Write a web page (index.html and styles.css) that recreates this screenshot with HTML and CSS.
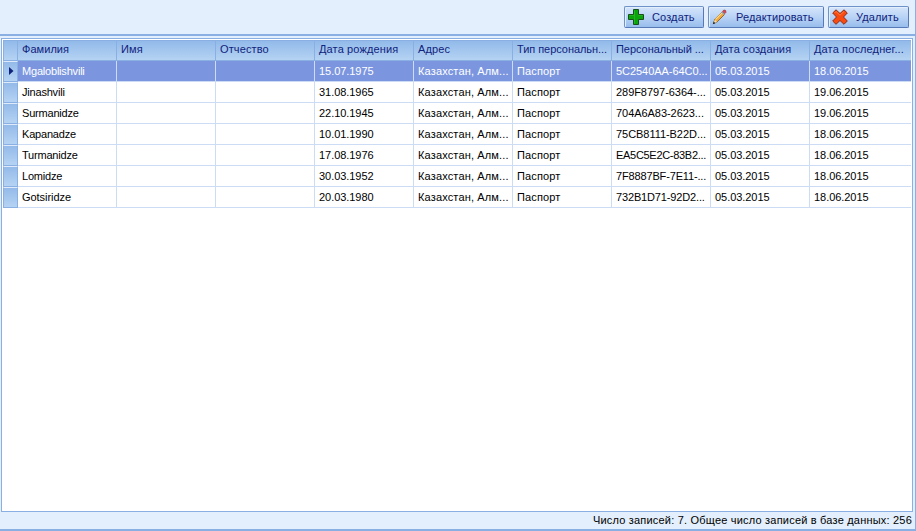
FILE: index.html
```html
<!DOCTYPE html>
<html lang="ru">
<head>
<meta charset="utf-8">
<title>Записи</title>
<link rel="stylesheet" href="styles.css">
</head>
<body>
<main class="panel">
<div class="toolbar">
<button class="btn create"><svg class="icon" width="18" height="18" viewBox="0 0 18 18"><path d="M6.500 1.500h5v5h5v5h-5v5h-5v-5h-5v-5h5z" fill="#0aa50a" stroke="#17501a"/><path d="M7.500 15.500V2.500M2.500 7.500h5M11.500 7.500h4" fill="none" stroke="#22b422"/></svg><span>Создать</span></button>
<button class="btn edit"><svg class="icon" width="18" height="18" viewBox="0 0 18 18"><path d="M2.500 15.500l1.200-4L11 4l2.500 2.500-7.300 7.300z" fill="#f2a93c" stroke="#745127" stroke-width=".8"/><path d="M4.500 11.300L11 4.800" stroke="#ffdc8a" stroke-width="1.200"/><path d="M11.500 3.500l1.300-1.500q2.500-.3 2.200 2.300L13.700 5.700z" fill="#e2464c" stroke="#8a3a42" stroke-width=".7"/><path d="M10.700 3.900l2.700 2.700" stroke="#9aa5b2" stroke-width="1.300"/><path d="M3.800 11.800l2.200 2-3.700 1.900z" fill="#f6dcaa"/><path d="M1.800 16.200l.9-2.700 1.700 1.700z" fill="#222"/></svg><span>Редактировать</span></button>
<button class="btn delete"><svg class="icon" width="18" height="18" viewBox="0 0 18 18"><path d="M5 1.800L9 5.500l4-3.700L16.300 5l-3.800 4 3.800 4-3.300 3.300-4-3.800-4 3.800L1.700 13l3.800-4-3.800-4z" fill="#f94a10" stroke="#8e2c16" stroke-linejoin="round"/><path d="M3.500 5L5 3.500l4 3.700 4-3.700" fill="none" stroke="#ff7a3c"/></svg><span>Удалить</span></button>
</div>
<section class="grid">
<div class="row head"><i></i><b class="tight">Фамилия</b><b>Имя</b><b>Отчество</b><b>Дата рождения</b><b>Адрес</b><b class="tighter">Тип персональн...</b><b class="tighter">Персональный ...</b><b>Дата создания</b><b>Дата последнег...</b></div>
<div class="row selected"><i><svg width="5" height="8" viewBox="0 0 5 8"><path d="M0 0l4.500 4L0 8z" fill="#10237c"/></svg></i><b class="name">Mgaloblishvili</b><b></b><b></b><b>15.07.1975</b><b class="addr">Казахстан, Алм...</b><b class="doc">Паспорт</b><b>5C2540AA-64C0...</b><b>05.03.2015</b><b>18.06.2015</b></div>
<div class="row"><i></i><b class="name">Jinashvili</b><b></b><b></b><b>31.08.1965</b><b class="addr">Казахстан, Алм...</b><b class="doc">Паспорт</b><b>289F8797-6364-...</b><b>05.03.2015</b><b>19.06.2015</b></div>
<div class="row"><i></i><b class="name">Surmanidze</b><b></b><b></b><b>22.10.1945</b><b class="addr">Казахстан, Алм...</b><b class="doc">Паспорт</b><b>704A6A83-2623...</b><b>05.03.2015</b><b>19.06.2015</b></div>
<div class="row"><i></i><b class="name">Kapanadze</b><b></b><b></b><b>10.01.1990</b><b class="addr">Казахстан, Алм...</b><b class="doc">Паспорт</b><b>75CB8111-B22D...</b><b>05.03.2015</b><b>18.06.2015</b></div>
<div class="row"><i></i><b class="name">Turmanidze</b><b></b><b></b><b>17.08.1976</b><b class="addr">Казахстан, Алм...</b><b class="doc">Паспорт</b><b class="id-narrow">EA5C5E2C-83B2...</b><b>05.03.2015</b><b>18.06.2015</b></div>
<div class="row"><i></i><b class="name">Lomidze</b><b></b><b></b><b>30.03.1952</b><b class="addr">Казахстан, Алм...</b><b class="doc">Паспорт</b><b class="id">7F8887BF-7E11-...</b><b>05.03.2015</b><b>18.06.2015</b></div>
<div class="row"><i></i><b>Gotsiridze</b><b></b><b></b><b>20.03.1980</b><b class="addr">Казахстан, Алм...</b><b class="doc">Паспорт</b><b class="id">732B1D71-92D2...</b><b>05.03.2015</b><b>18.06.2015</b></div>
</section>
<footer class="status"><span>Число записей: 7. Общее число записей в базе данных: 256</span></footer>
</main>
</body>
</html>
```

FILE: styles.css
```css
* { box-sizing: border-box; }
body { margin: 0; font: 11px/14px "Liberation Sans", Arial, sans-serif; color: #000; }
.panel { display: flex; flex-direction: column; width: 916px; height: 531px; background: #e3effc; border-right: 1px solid #8aafe3; border-bottom: 2px solid #8aafe3; }
.toolbar { display: flex; justify-content: flex-end; gap: 4px; height: 36px; flex: none; padding: 6px 6px 0 0; border-bottom: 2px solid #8aafe3; }
.btn { display: flex; align-items: center; height: 22px; padding: 0 0 0 2px; border: 1px solid #6f92cb; border-right-color: #5879b8; border-bottom-color: #5879b8; border-radius: 2px; background: linear-gradient(#d5e5fa, #b9d3f5 50%, #98bdec); box-shadow: inset 1px 1px #e4effc; color: #10237c; font: 11px/14px "Liberation Sans", Arial, sans-serif; letter-spacing: .12px; white-space: nowrap; }
.icon { flex: none; margin-right: 7px; }
.create { width: 80px; }
.edit { width: 116px; }
.delete { width: 81px; }
.grid { width: 912px; height: 474px; margin: 2px 0 0 1px; flex: none; border: 1px solid #8aafe3; background: #fff; padding: 1px 1px 0 1px; }
.row { display: grid; grid-template-columns: 15px repeat(8, 99px) 102px; height: 21px; overflow: hidden; letter-spacing: -.05px; }
.row b { font-weight: 400; padding: 3px 0 0 4px; border-right: 1px solid #cbdcf4; border-bottom: 1px solid #cbdcf4; white-space: nowrap; overflow: hidden; }
.row b:last-child { border-right: 0; }
.row i { display: flex; align-items: center; padding: 0 0 2px 5px; border: 1px solid #8aafe3; border-top-color: #dfeafa; background: linear-gradient(#94bae9, #b5d3f3); }
.head { color: #10237c; border-top: 1px solid #8aafe3; background: linear-gradient(#92baea, #b7d4f3); letter-spacing: .13px; }
.head b { padding-top: 1px; border-right-color: #8aafe3; border-bottom-color: #8aafe3; }
.head i { border-top: 0; background: none; }
.head .tight { letter-spacing: .05px; }
.head .tighter { letter-spacing: -.05px; }
.selected b { background: #7b96df; color: #fff; }
.addr, .doc { letter-spacing: .15px; }
.row .name { letter-spacing: -.2px; }
.id { letter-spacing: -.15px; }
.id-narrow { letter-spacing: -.3px; }
.status { display: flex; justify-content: flex-end; padding: 1px 3px 0 0; letter-spacing: .2px; }
```
